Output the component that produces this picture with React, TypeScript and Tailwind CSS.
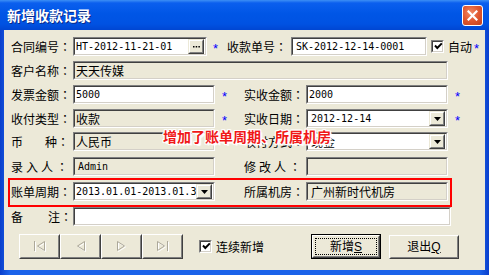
import React from "react";

const MONO = "font-['DejaVu_Sans_Mono',monospace] text-[10px] leading-none";

function C() {
  return <span className="font-['Noto_Sans_CJK_TC','Noto_Sans_CJK_JP',sans-serif]">：</span>;
}

function Sunken({ className, white, children }: { className: string; white?: boolean; children?: React.ReactNode }) {
  return (
    <div className={`${className} border border-t-[#808080] border-l-[#808080] border-b-white border-r-white`}>
      <div
        className={`h-full w-full border border-t-[#404040] border-l-[#404040] border-b-[#d4d0c8] border-r-[#d4d0c8] flex items-center ${
          white ? "bg-white" : "bg-[#ece9d8]"
        }`}
      >
        {children}
      </div>
    </div>
  );
}

function DropBtn() {
  return (
    <div className="w-[16px] h-[15px] mr-[1px] border border-t-[#ece9d8] border-l-[#ece9d8] border-b-[#404040] border-r-[#404040] shrink-0">
      <div className="h-full w-full border border-t-white border-l-white border-b-[#808080] border-r-[#808080] bg-[#ece9d8] flex items-center justify-center">
        <svg width="7" height="4" viewBox="0 0 7 4">
          <polygon points="0,0 7,0 3.5,4" fill="#000" />
        </svg>
      </div>
    </div>
  );
}

function Field({
  w,
  white,
  combo,
  browse,
  children,
}: {
  w: string;
  white?: boolean;
  combo?: boolean;
  browse?: boolean;
  children?: React.ReactNode;
}) {
  return (
    <Sunken className={`${w} h-[19px] shrink-0`} white={white}>
      <div className="flex-1 pl-[1px] overflow-hidden whitespace-nowrap flex items-center">{children}</div>
      {combo && <DropBtn />}
      {browse && (
        <div className="w-[16px] h-[15px] mr-[1px] border border-t-[#ece9d8] border-l-[#ece9d8] border-b-[#404040] border-r-[#404040] shrink-0">
          <div className="h-full w-full border border-t-white border-l-white border-b-[#808080] border-r-[#808080] bg-[#ece9d8] flex items-center justify-center">
            <svg width="7" height="2" viewBox="0 0 7 2">
              <rect x="0" y="0" width="1.5" height="1.5" fill="#000" />
              <rect x="2.7" y="0" width="1.5" height="1.5" fill="#000" />
              <rect x="5.4" y="0" width="1.5" height="1.5" fill="#000" />
            </svg>
          </div>
        </div>
      )}
    </Sunken>
  );
}

function Star({ className }: { className: string }) {
  return (
    <span className={`${className} text-[#0000ff] font-['Liberation_Sans',sans-serif] text-[13px] leading-none pt-[5px]`}>*</span>
  );
}

function Label({ children, className }: { children: React.ReactNode; className?: string }) {
  return <div className={`w-[62px] shrink-0 flex items-center whitespace-nowrap ${className ?? ""}`}>{children}</div>;
}

function Checkbox() {
  return (
    <Sunken className="w-[13px] h-[13px] shrink-0" white>
      <svg width="11" height="11" viewBox="0 0 11 11" className="shrink-0">
        <polyline points="2,4.5 4.3,7 8.8,2.3" fill="none" stroke="#000" strokeWidth="1.9" />
      </svg>
    </Sunken>
  );
}

function Raised({ className, children }: { className: string; children?: React.ReactNode }) {
  return (
    <div className={`${className} border border-t-white border-l-white border-b-[#404040] border-r-[#404040] shrink-0`}>
      <div className="h-full w-full border border-t-[#ece9d8] border-l-[#ece9d8] border-b-[#808080] border-r-[#808080] bg-[#ece9d8] flex items-center justify-center">
        {children}
      </div>
    </div>
  );
}

function NavIcon({ kind }: { kind: number }) {
  const draw = (c: string, o: number) => {
    const t = `translate(${o},${o})`;
    if (kind === 0)
      return (
        <g transform={t} stroke={c} fill="none" strokeWidth="1">
          <line x1="1.5" y1="1" x2="1.5" y2="11" />
          <polygon points="11.5,1.5 4.5,6 11.5,10.5" />
        </g>
      );
    if (kind === 1)
      return (
        <g transform={t} stroke={c} fill="none" strokeWidth="1">
          <polygon points="10.5,1.5 3.5,6 10.5,10.5" />
        </g>
      );
    if (kind === 2)
      return (
        <g transform={t} stroke={c} fill="none" strokeWidth="1">
          <polygon points="2.5,1.5 9.5,6 2.5,10.5" />
        </g>
      );
    return (
      <g transform={t} stroke={c} fill="none" strokeWidth="1">
        <polygon points="1.5,1.5 8.5,6 1.5,10.5" />
        <line x1="11.5" y1="1" x2="11.5" y2="11" />
      </g>
    );
  };
  return (
    <svg width="14" height="13" viewBox="0 0 14 13">
      {draw("#ffffff", 1)}
      {draw("#aca899", 0)}
    </svg>
  );
}

export default function App() {
  return (
    <div className="relative w-[489px] h-[275px] flex flex-col overflow-hidden font-['Noto_Sans_CJK_SC','Liberation_Sans',sans-serif] text-[12px] text-black bg-[#0054e3]">
      {/* Title bar */}
      <div className="h-[30px] shrink-0 flex items-center justify-between pl-[7px] pr-[6px] bg-[linear-gradient(to_bottom,#3d8ff5_0%,#0b5fee_10%,#0056e6_45%,#0052e2_80%,#0046d2_100%)]">
        <span className="text-white font-bold text-[14px] leading-none [text-shadow:1px_1px_0_#0a2a8a]">新增收款记录</span>
        <div className="w-[21px] h-[21px] rounded-[3px] border border-white bg-[radial-gradient(circle_at_40%_35%,#f08a66_0%,#e0572f_50%,#c2401c_100%)] flex items-center justify-center">
          <svg width="11" height="11" viewBox="0 0 11 11">
            <line x1="1.5" y1="1.5" x2="9.5" y2="9.5" stroke="#fff" strokeWidth="2.2" strokeLinecap="square" />
            <line x1="9.5" y1="1.5" x2="1.5" y2="9.5" stroke="#fff" strokeWidth="2.2" strokeLinecap="square" />
          </svg>
        </div>
      </div>

      {/* Body with frame */}
      <div className="flex-1 flex px-[4px] pb-[5px] bg-[linear-gradient(to_right,#0a3fcc_0%,#1b63ea_2%,#1b63ea_98%,#0a3fcc_100%)]">
        <div className="flex-1 bg-[#ece9d8] pl-[7px] pt-[7px] flex flex-col">
          {/* Row 1 */}
          <div className="h-[19px] flex items-center">
            <Label>
              合同编号<C />
            </Label>
            <Field w="w-[134px]" white browse>
              <span className={MONO}>HT-2012-11-21-01</span>
            </Field>
            <Star className="w-[20px] pl-[6px] shrink-0 self-stretch" />
            <Label className="w-[64px]">
              收款单号<C />
            </Label>
            <Field w="w-[136px]" white>
              <span className={`${MONO} pl-[2px]`}>SK-2012-12-14-0001</span>
            </Field>
            <div className="ml-[4px]">
              <Checkbox />
            </div>
            <span className="ml-[4px]">自动</span>
            <Star className="ml-[2px] self-stretch" />
          </div>

          {/* Row 2 */}
          <div className="h-[19px] mt-[5px] flex items-center">
            <Label>
              客户名称<C />
            </Label>
            <Field w="w-[375px]">
              <span>天天传媒</span>
            </Field>
          </div>

          {/* Row 3 */}
          <div className="h-[19px] mt-[5px] flex items-center">
            <Label>
              发票金额<C />
            </Label>
            <Field w="w-[142px]" white>
              <span className={MONO}>5000</span>
            </Field>
            <Star className="w-[29px] pl-[7px] shrink-0 self-stretch" />
            <Label>
              实收金额<C />
            </Label>
            <Field w="w-[142px]" white>
              <span className={MONO}>2000</span>
            </Field>
            <Star className="pl-[7px] self-stretch" />
          </div>

          {/* Row 4 */}
          <div className="h-[19px] mt-[5px] flex items-center">
            <Label>
              收付类型<C />
            </Label>
            <Field w="w-[142px]">
              <span>收款</span>
            </Field>
            <Star className="w-[29px] pl-[7px] shrink-0 self-stretch" />
            <Label>
              实收日期<C />
            </Label>
            <Field w="w-[142px]" white combo>
              <span className={`${MONO} pl-[2px]`}>2012-12-14</span>
            </Field>
            <Star className="pl-[7px] self-stretch" />
          </div>

          {/* Row 5 */}
          <div className="h-[19px] mt-[4px] flex items-center">
            <Label>
              <span>币</span>
              <span className="ml-[22px]">种</span>
              <C />
            </Label>
            <Field w="w-[142px]">
              <span>人民币</span>
            </Field>
            <div className="w-[29px] shrink-0" />
            <Label>
              收付方式<C />
            </Label>
            <Field w="w-[142px]" white combo>
              <span className="pl-[2px]">现金</span>
            </Field>
          </div>

          {/* Row 6 */}
          <div className="h-[19px] mt-[6px] flex items-center">
            <Label>
              <span>录</span>
              <span className="ml-[3px]">入</span>
              <span className="ml-[3px]">人</span>
              <span className="ml-[3px]">
                <C />
              </span>
            </Label>
            <Field w="w-[142px]">
              <span className={`${MONO} pl-[2px]`}>Admin</span>
            </Field>
            <div className="w-[29px] shrink-0" />
            <Label>
              <span>修</span>
              <span className="ml-[3px]">改</span>
              <span className="ml-[3px]">人</span>
              <span className="ml-[3px]">
                <C />
              </span>
            </Label>
            <Field w="w-[142px]" />
          </div>

          {/* Row 7 */}
          <div className="h-[19px] mt-[6px] flex items-center">
            <Label>
              账单周期<C />
            </Label>
            <Field w="w-[142px]" white combo>
              <span className={MONO}>2013.01.01-2013.01.31</span>
            </Field>
            <div className="w-[29px] shrink-0" />
            <Label>
              所属机房<C />
            </Label>
            <Field w="w-[142px]">
              <span className="pl-[2px]">广州新时代机房</span>
            </Field>
          </div>

          {/* Row 8 */}
          <div className="h-[19px] mt-[6px] flex items-center">
            <Label>
              <span>备</span>
              <span className="ml-[25px]">注</span>
              <C />
            </Label>
            <Field w="w-[378px]" white />
          </div>

          {/* Row 9 buttons */}
          <div className="h-[25px] mt-[8px] flex items-center">
            <div className="ml-[8px] flex">
              <Raised className="w-[41px] h-[25px]">
                <NavIcon kind={0} />
              </Raised>
              <Raised className="w-[41px] h-[25px]">
                <NavIcon kind={1} />
              </Raised>
              <Raised className="w-[41px] h-[25px]">
                <NavIcon kind={2} />
              </Raised>
              <Raised className="w-[41px] h-[25px]">
                <NavIcon kind={3} />
              </Raised>
            </div>
            <div className="ml-[16px] flex items-center">
              <Checkbox />
              <span className="ml-[4px]">连续新增</span>
            </div>
            <div className="ml-[47px] w-[70px] h-[25px] border border-black shrink-0">
              <div className="h-full w-full border border-t-white border-l-white border-b-[#404040] border-r-[#404040]">
                <div className="h-full w-full border border-t-[#ece9d8] border-l-[#ece9d8] border-b-[#808080] border-r-[#808080] bg-[#ece9d8] p-[1px]">
                  <div className="h-full w-full border border-dotted border-black flex items-center justify-center">
                    <span>
                      新增<span className="underline font-['Liberation_Sans',sans-serif]">S</span>
                    </span>
                  </div>
                </div>
              </div>
            </div>
            <Raised className="ml-[8px] w-[70px] h-[24px]">
              <span>
                退出<span className="underline font-['Liberation_Sans',sans-serif]">Q</span>
              </span>
            </Raised>
          </div>
        </div>
      </div>

      {/* Annotations */}
      <div className="absolute left-[8px] top-[178px] w-[444px] h-[29px] border-2 border-[#ff0000] pointer-events-none" />
      <div className="absolute left-[163px] top-[129px] text-[14px] font-bold leading-none text-[#f01818] whitespace-nowrap [text-shadow:1px_0_0_#fff,-1px_0_0_#fff,0_1px_0_#fff,0_-1px_0_#fff,1px_1px_0_#fff,-1px_-1px_0_#fff,1px_-1px_0_#fff,-1px_1px_0_#fff,2px_2px_1px_#fff]">
        增加了账单周期、所属机房
      </div>
    </div>
  );
}
